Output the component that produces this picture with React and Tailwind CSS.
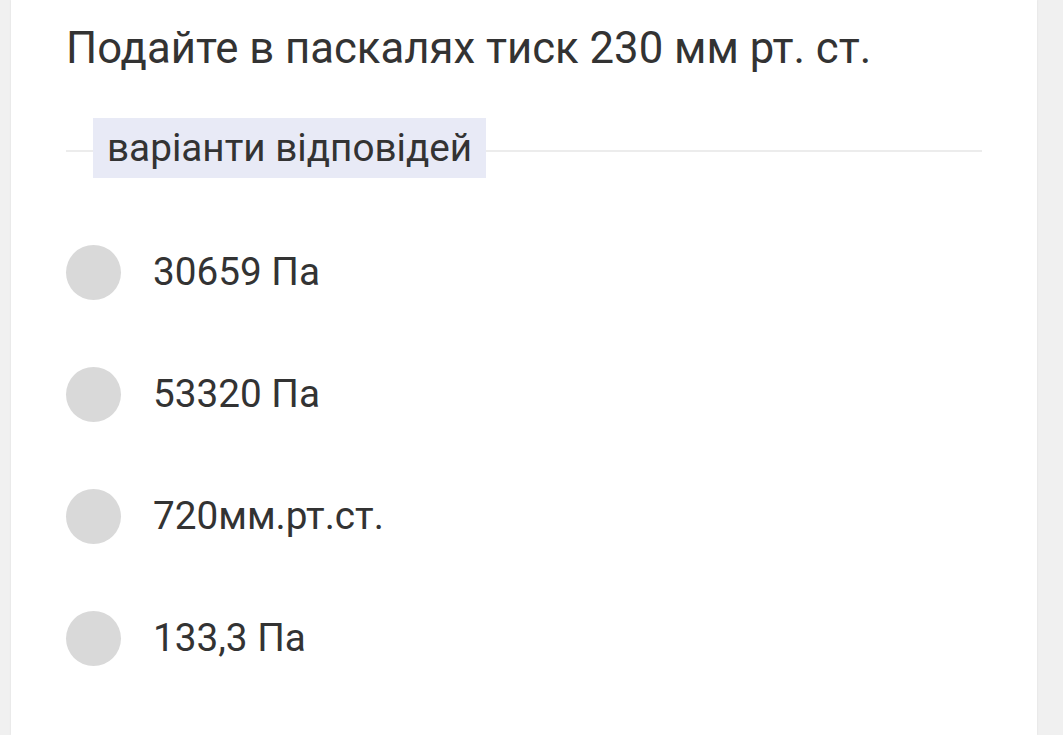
import React from "react";

const options = ["30659 Па", "53320 Па", "720мм.рт.ст.", "133,3 Па"];

export default function App() {
  return (
    <div
      className="flex h-[735px] w-[1063px] overflow-hidden bg-[#f0f0f0]"
      style={{ fontFamily: "Roboto, 'Noto Sans', sans-serif" }}
    >
      <div className="ml-[11px] h-full w-[1026px] bg-white shadow-[0_0_2px_rgba(0,0,0,0.08)]">
        <div className="pl-[55px] pr-[55px] pt-[20px]">
          <h1 className="text-[43.7px] leading-[56px] font-normal text-[#333333]">
            Подайте в паскалях тиск 230 мм рт. ст.
          </h1>
          <div className="relative mt-[42px] h-[60px]">
            <div className="absolute left-0 right-0 top-[32px] h-[2px] bg-[#ececec]" />
            <div className="absolute left-[27px] top-0 flex h-[60px] items-center bg-[#e8eaf6] px-[14px]">
              <span className="text-[38.7px] leading-none text-[#333333]">варіанти відповідей</span>
            </div>
          </div>
          <div className="mt-[67px] flex flex-col gap-[67px]">
            {options.map((o) => (
              <div key={o} className="flex h-[55px] items-center">
                <div className="h-[55px] w-[55px] shrink-0 rounded-full bg-[#d9d9d9]" />
                <span className="ml-[32px] text-[38.7px] leading-none text-[#333333]">{o}</span>
              </div>
            ))}
          </div>
        </div>
      </div>
    </div>
  );
}
